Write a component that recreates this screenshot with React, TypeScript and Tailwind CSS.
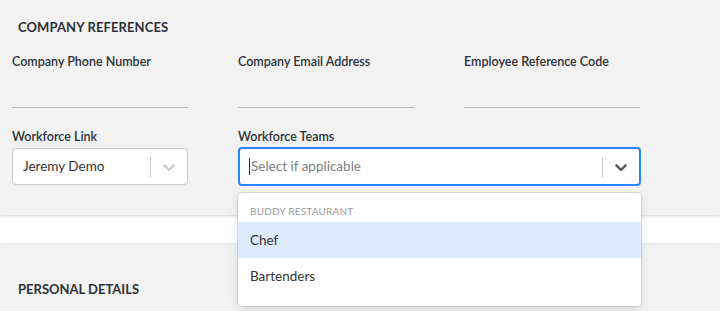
import React from "react";

const font = { fontFamily: "Lato, 'Noto Sans', sans-serif" };

function Chevron({ className }: { className?: string }) {
  return (
    <svg viewBox="0 0 20 20" width="20" height="20" className={className} fill="currentColor">
      <path d="M4.516 7.548c0.436-0.446 1.043-0.481 1.576 0l3.908 3.747 3.908-3.747c0.533-0.481 1.141-0.446 1.574 0 0.436 0.445 0.408 1.197 0 1.615-0.406 0.418-4.695 4.502-4.695 4.502-0.217 0.223-0.502 0.335-0.787 0.335s-0.57-0.112-0.789-0.335c0 0-4.287-4.084-4.695-4.502s-0.436-1.17 0-1.615z" />
    </svg>
  );
}

export default function App() {
  return (
    <div className="w-[720px] h-[311px] overflow-hidden bg-[#f2f2f2] text-[#2e3136]" style={font}>
      <div className="relative bg-[#f2f2f2] h-[215px] pt-[17px] shadow-[0_1px_3px_rgba(0,0,0,0.18)] z-10">
        <div className="px-[18px] text-[13px] font-bold leading-[20px] tracking-[0.1px]">COMPANY REFERENCES</div>
        <div className="px-[12px] mt-[15px] flex gap-[50px]">
          {["Company Phone Number", "Company Email Address", "Employee Reference Code"].map((l) => (
            <div key={l} className="w-[176px] flex flex-col">
              <div className="text-[12.5px] font-semibold leading-[20px]">{l}</div>
              <div className="h-[36px] border-b border-[#b5b5b5]" />
            </div>
          ))}
        </div>
        <div className="px-[12px] mt-[19px] flex gap-[50px]">
          <div className="w-[176px] flex flex-col">
            <div className="text-[12.5px] font-semibold leading-[20px]">Workforce Link</div>
            <div className="mt-[1px] h-[37px] bg-white border border-[#cccccc] rounded-[4px] flex items-center">
              <div className="flex-1 pl-[10px] text-[13.5px] text-[#333]">Jeremy Demo</div>
              <div className="w-px h-[20px] bg-[#cccccc]" />
              <div className="w-[36px] flex items-center justify-center text-[#cccccc]">
                <Chevron />
              </div>
            </div>
          </div>
          <div className="w-[403px] flex flex-col relative">
            <div className="text-[12.5px] font-semibold leading-[20px]">Workforce Teams</div>
            <div className="h-[39px] bg-white border-2 border-[#2684ff] rounded-[4px] flex items-center">
              <div className="flex-1 pl-[9px] text-[13.5px] text-[#808080] flex items-center">
                <span className="w-px h-[17px] bg-[#333] mr-[1px]" />
                Select if applicable
              </div>
              <div className="w-px h-[20px] bg-[#cccccc]" />
              <div className="w-[36px] flex items-center justify-center text-[#555]">
                <Chevron />
              </div>
            </div>
            <div className="absolute left-0 top-[66px] w-[403px] bg-white rounded-[4px] shadow-[0_0_0_1px_rgba(0,0,0,0.1),0_4px_11px_rgba(0,0,0,0.1)] pt-[4px] pb-[12px] z-20">
              <div className="px-[12px] pt-[7px] pb-[4px] text-[10px] leading-[14px] text-[#999] uppercase tracking-[0.2px]">Buddy Restaurant</div>
              <div className="h-[36px] px-[12px] flex items-center bg-[#deebff] text-[13.5px] text-[#333]">Chef</div>
              <div className="h-[36px] px-[12px] flex items-center text-[13.5px] text-[#333]">Bartenders</div>
            </div>
          </div>
        </div>
      </div>
      <div className="h-[28px] bg-white shadow-[0_1px_2px_rgba(0,0,0,0.05)]" />
      <div className="px-[18px] pt-[36px] text-[13px] font-bold leading-[20px]">PERSONAL DETAILS</div>
    </div>
  );
}
